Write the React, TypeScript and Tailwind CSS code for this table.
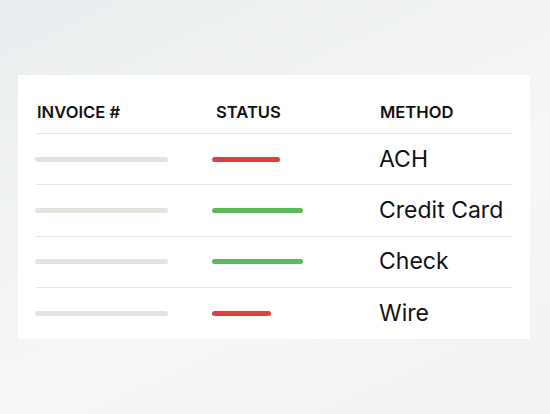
const rows = [
  { status: "bg-[#d9423a]", statusW: "w-[68px]", method: "ACH" },
  { status: "bg-[#5cb75a]", statusW: "w-[91px]", method: "Credit Card" },
  { status: "bg-[#5cb75a]", statusW: "w-[91px]", method: "Check" },
  { status: "bg-[#d9423a]", statusW: "w-[59px]", method: "Wire" },
];

export default function App() {
  return (
    <div className="h-[414px] w-[550px] overflow-hidden bg-[linear-gradient(155deg,#e9ecee_0%,#f1f3f3_35%,#f6f7f7_60%,#f0f2f3_100%)] pt-[75px] pl-[18px] font-['Inter',sans-serif] text-[#111]">
      <div className="w-[512px] bg-white px-[18px]">
        <div className="grid h-[58px] grid-cols-[179px_164px_1fr] items-center pt-[16px] pl-px text-[16.6px] font-semibold">
          <span>INVOICE #</span>
          <span>STATUS</span>
          <span>METHOD</span>
        </div>
        {rows.map((row, idx) => (
          <div key={idx} className="grid h-[51.4px] grid-cols-[176px_167px_1fr] items-center border-t border-[#e4e4e2]">
            <div className="-ml-px h-[5px] w-[133px] rounded-full bg-[#e2e1dc]" />
            <div className={`h-[5px] rounded-full ${row.status} ${row.statusW}`} />
            <span className="whitespace-nowrap text-[23px] leading-none">{row.method}</span>
          </div>
        ))}
      </div>
    </div>
  );
}
